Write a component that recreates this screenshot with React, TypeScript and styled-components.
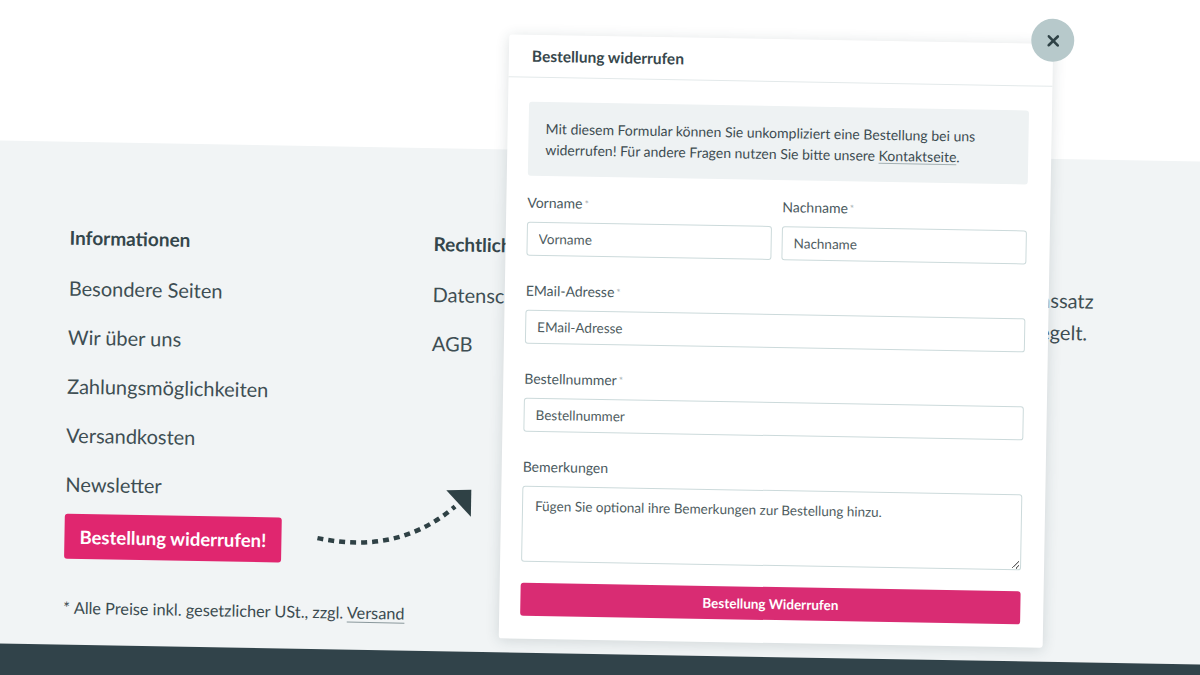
import styled, { createGlobalStyle } from "styled-components";

const GlobalStyle = createGlobalStyle`
  html, body {
    margin: 0;
    padding: 0;
    width: 1200px;
    height: 675px;
    overflow: hidden;
    background: #ffffff;
  }
  * {
    box-sizing: border-box;
  }
  body {
    font-family: Lato, "Open Sans", sans-serif;
    color: #3b4b50;
  }
`;

const Stage = styled.div`
  position: relative;
  width: 1240px;
  height: 715px;
  margin: -20px 0 0 -20px;
  display: flex;
  flex-direction: column;
  transform: rotate(1deg);
  transform-origin: 50% 50%;
  overflow: hidden;
`;

const TopBand = styled.div`
  height: 171px;
  flex-shrink: 0;
  background: #ffffff;
`;

const Footer = styled.footer`
  background: #f1f4f5;
  padding: 82px 127px 26px 88px;
  flex-shrink: 0;
`;

const Columns = styled.div`
  display: grid;
  grid-template-columns: 364px 364px 297px;
`;

const Column = styled.div`
  display: flex;
  flex-direction: column;
  align-items: flex-start;
`;

const ColumnTitle = styled.h4`
  margin: 0;
  font-size: 19px;
  line-height: 28px;
  font-weight: 700;
  color: #34464b;
`;

const FooterLink = styled.a<{ $first?: boolean }>`
  display: block;
  margin-top: ${(p) => (p.$first ? "22px" : "21px")};
  font-size: 20px;
  line-height: 28px;
  color: #3e4e53;
  text-decoration: none;
  white-space: nowrap;
`;

const InfoLines = styled.p`
  align-self: stretch;
  margin: 15px 0 0;
  text-align: right;
  font-size: 20px;
  line-height: 32px;
  color: #3e4e53;
  white-space: nowrap;
`;

const InfoLine = styled.span<{ $inset?: number }>`
  display: block;
  padding-right: ${(p) => p.$inset ?? 0}px;
`;

const ButtonRow = styled.div`
  display: flex;
  align-items: flex-start;
  margin-top: 16px;
`;

const CtaButton = styled.button`
  flex-shrink: 0;
  width: 217px;
  height: 45px;
  border: none;
  border-radius: 3px;
  background: #e0266f;
  color: #ffffff;
  font-family: Lato, sans-serif;
  font-weight: 700;
  font-size: 18.5px;
  cursor: pointer;
`;

const Arrow = styled.svg`
  flex-shrink: 0;
  margin-left: 33px;
  overflow: visible;
`;

const FootNote = styled.p`
  margin: 38px 0 0;
  font-size: 16.3px;
  line-height: 22px;
  color: #3b4b50;
`;

const NoteLink = styled.a`
  color: inherit;
  text-decoration: underline;
  text-decoration-color: #8a989c;
  text-underline-offset: 3px;
`;

const BottomBand = styled.div`
  flex: 1;
  background: #31434a;
`;

/* ---------- modal ---------- */

const Modal = styled.div`
  position: absolute;
  left: 524px;
  top: 56px;
  width: 544px;
  background: #ffffff;
  border-radius: 3px;
  box-shadow: 0 2px 14px rgba(40, 60, 66, 0.16);
`;

const CloseButton = styled.button`
  position: absolute;
  right: -21px;
  top: -25px;
  width: 43px;
  height: 43px;
  border: none;
  border-radius: 50%;
  background: #b7c9cb;
  display: flex;
  align-items: center;
  justify-content: center;
  cursor: pointer;
`;

const ModalHeader = styled.div`
  height: 43px;
  padding: 0 23px;
  display: flex;
  align-items: center;
  border-bottom: 1px solid #e3e9ea;
  font-size: 15.5px;
  font-weight: 700;
  color: #37474c;
`;

const ModalBody = styled.form`
  padding: 24px 23px 23px 21px;
  display: flex;
  flex-direction: column;
`;

const InfoBox = styled.div`
  background: #eef2f3;
  border-radius: 3px;
  padding: 16px 17px;
  font-size: 14px;
  line-height: 21px;
  color: #3d4c51;
  margin-bottom: 17px;
`;

const InfoLink = styled.a`
  color: inherit;
  text-decoration: underline;
  text-decoration-color: #a3b0b3;
  text-underline-offset: 2px;
`;

const FieldRow = styled.div`
  display: grid;
  grid-template-columns: 1fr 1fr;
  column-gap: 10px;
`;

const Field = styled.div<{ $last?: boolean }>`
  display: flex;
  flex-direction: column;
  margin-bottom: ${(p) => (p.$last ? "0" : "25px")};
`;

const Label = styled.label`
  font-size: 14px;
  line-height: 20px;
  color: #4a595e;
  margin-bottom: 9px;
`;

const Required = styled.span`
  margin-left: 2px;
  font-size: 10px;
  vertical-align: top;
  color: #a3adb0;
`;

const Input = styled.input`
  height: 34px;
  width: 100%;
  border: 1px solid #ccdadb;
  border-radius: 3px;
  padding: 0 11px;
  font-family: Lato, sans-serif;
  font-size: 13.5px;
  color: #3b4b50;
  background: #ffffff;
  &::placeholder {
    color: #4f5d61;
  }
`;

const TextArea = styled.textarea`
  height: 76px;
  width: 100%;
  border: 1px solid #ccdadb;
  border-radius: 3px;
  padding: 9px 12px;
  font-family: Lato, sans-serif;
  font-size: 13.5px;
  line-height: 20px;
  color: #3b4b50;
  resize: vertical;
  &::placeholder {
    color: #4f5d61;
  }
`;

const SubmitButton = styled.button`
  margin-top: 21px;
  height: 33px;
  width: 100%;
  border: none;
  border-radius: 3px;
  background: #d92c73;
  color: #ffffff;
  font-family: Lato, sans-serif;
  font-weight: 700;
  font-size: 13.5px;
  cursor: pointer;
`;

function DottedArrow() {
  return (
    <Arrow width="160" height="45" viewBox="0 0 160 45">
      <path
        d="M3 20 C 45 28, 95 26, 140 -14"
        fill="none"
        stroke="#2f4145"
        strokeWidth="4.5"
        strokeDasharray="6 5"
      />
      <polygon points="131,-30 156,-31 156,-4" fill="#2f4145" />
    </Arrow>
  );
}

function RevokeModal() {
  return (
    <Modal>
      <CloseButton type="button" aria-label="Schließen">
        <svg width="12" height="12" viewBox="0 0 12 12">
          <path d="M1.5 1.5 L10.5 10.5 M10.5 1.5 L1.5 10.5" stroke="#2f4246" strokeWidth="2.6" strokeLinecap="round" />
        </svg>
      </CloseButton>
      <ModalHeader>Bestellung widerrufen</ModalHeader>
      <ModalBody onSubmit={(e) => e.preventDefault()}>
        <InfoBox>
          Mit diesem Formular können Sie unkompliziert eine Bestellung bei uns
          widerrufen! Für andere Fragen nutzen Sie bitte unsere{" "}
          <InfoLink href="#">Kontaktseite</InfoLink>.
        </InfoBox>
        <FieldRow>
          <Field>
            <Label>
              Vorname<Required>*</Required>
            </Label>
            <Input placeholder="Vorname" />
          </Field>
          <Field>
            <Label>
              Nachname<Required>*</Required>
            </Label>
            <Input placeholder="Nachname" />
          </Field>
        </FieldRow>
        <Field>
          <Label>
            EMail-Adresse<Required>*</Required>
          </Label>
          <Input placeholder="EMail-Adresse" />
        </Field>
        <Field>
          <Label>
            Bestellnummer<Required>*</Required>
          </Label>
          <Input placeholder="Bestellnummer" />
        </Field>
        <Field $last>
          <Label>Bemerkungen</Label>
          <TextArea placeholder="Fügen Sie optional ihre Bemerkungen zur Bestellung hinzu." />
        </Field>
        <SubmitButton type="submit">Bestellung Widerrufen</SubmitButton>
      </ModalBody>
    </Modal>
  );
}

export default function App() {
  return (
    <>
      <GlobalStyle />
      <Stage>
        <TopBand />
        <Footer>
          <Columns>
            <Column>
              <ColumnTitle>Informationen</ColumnTitle>
              <FooterLink $first href="#">Besondere Seiten</FooterLink>
              <FooterLink href="#">Wir über uns</FooterLink>
              <FooterLink href="#">Zahlungsmöglichkeiten</FooterLink>
              <FooterLink href="#">Versandkosten</FooterLink>
              <FooterLink href="#">Newsletter</FooterLink>
              <ButtonRow>
                <CtaButton type="button">Bestellung widerrufen!</CtaButton>
                <DottedArrow />
              </ButtonRow>
            </Column>
            <Column>
              <ColumnTitle>Rechtliches</ColumnTitle>
              <FooterLink $first href="#">Datenschutz</FooterLink>
              <FooterLink href="#">AGB</FooterLink>
            </Column>
            <Column>
              <ColumnTitle>Hinweis</ColumnTitle>
              <InfoLines>
                <InfoLine>nach Zinssatz</InfoLine>
                <InfoLine $inset={6}>gesondert geregelt.</InfoLine>
              </InfoLines>
            </Column>
          </Columns>
          <FootNote>
            * Alle Preise inkl. gesetzlicher USt., zzgl.{" "}
            <NoteLink href="#">Versand</NoteLink>
          </FootNote>
        </Footer>
        <BottomBand />
        <RevokeModal />
      </Stage>
    </>
  );
}
